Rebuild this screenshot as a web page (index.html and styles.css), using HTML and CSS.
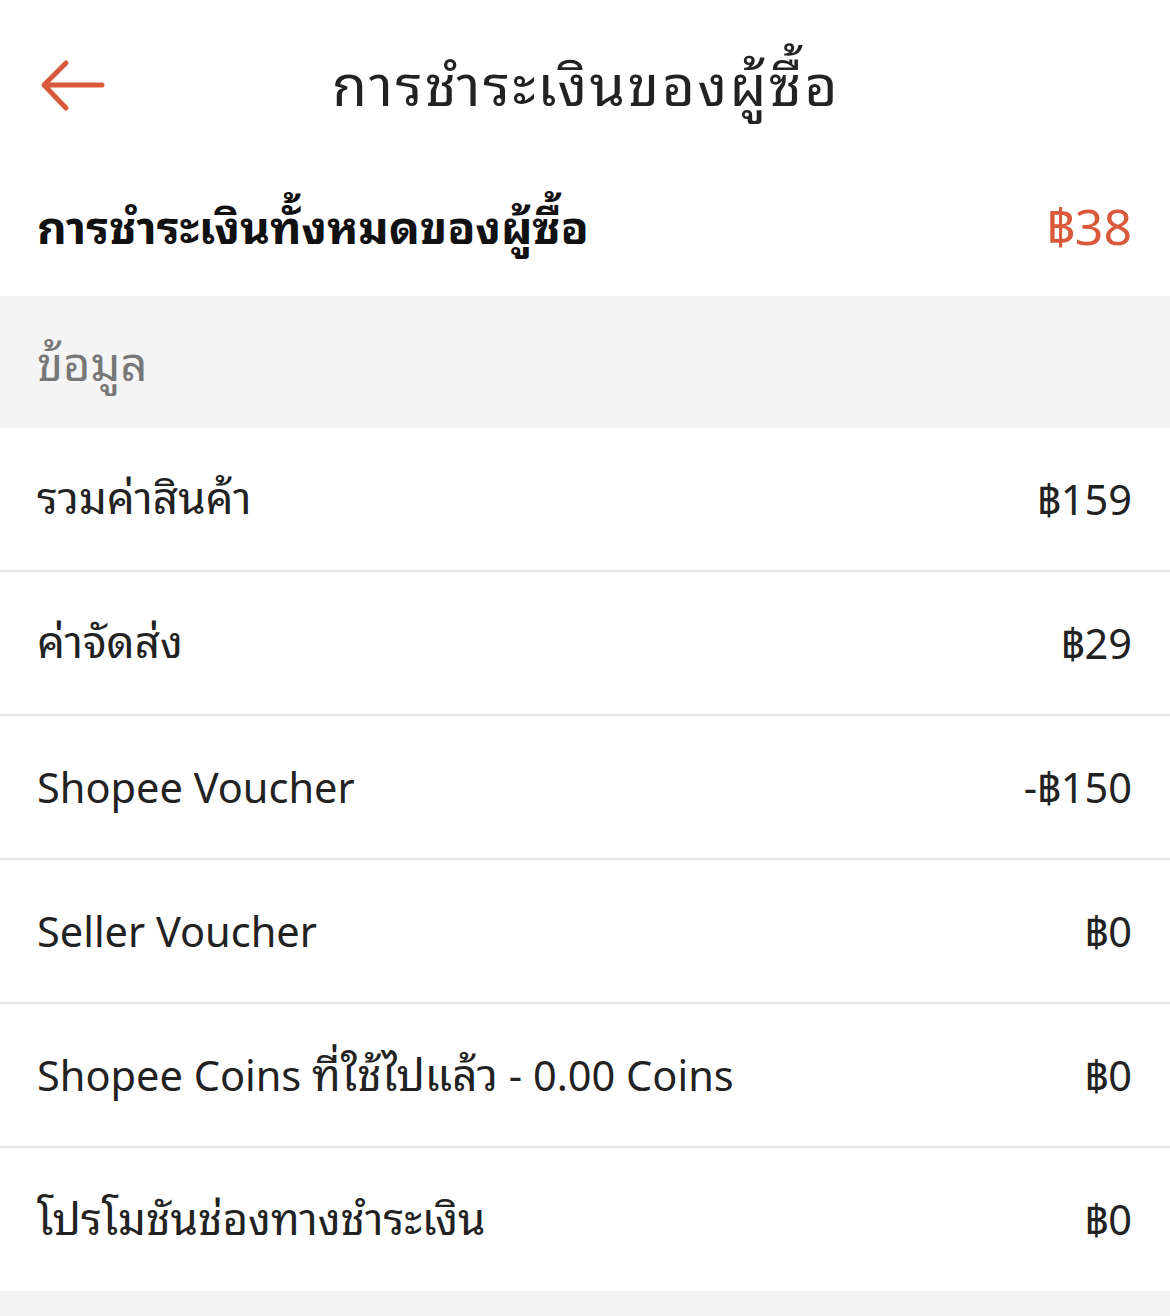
FILE: index.html
```html
<!DOCTYPE html>
<html lang="th">
<head>
<meta charset="utf-8">
<link rel="stylesheet" href="styles.css">
</head>
<body>
<div class="page">
  <header class="topbar">
    <div class="back">
      <svg width="66" height="56" viewBox="0 0 66 56"><path d="M62 27H5 M26 5 L4 27 L26 50" fill="none" stroke="#d85a3b" stroke-width="5" stroke-linecap="round" stroke-linejoin="round"/></svg>
    </div>
    <h1 class="title">การชำระเงินของผู้ซื้อ</h1>
  </header>
  <div class="total">
    <span class="total-label">การชำระเงินทั้งหมดของผู้ซื้อ</span>
    <span class="total-value">฿38</span>
  </div>
  <div class="section">ข้อมูล</div>
  <ul class="rows">
    <li class="row"><span class="th">รวมค่าสินค้า</span><span class="val">฿159</span></li>
    <li class="row"><span class="th">ค่าจัดส่ง</span><span class="val">฿29</span></li>
    <li class="row"><span>Shopee Voucher</span><span class="val">-฿150</span></li>
    <li class="row"><span>Seller Voucher</span><span class="val">฿0</span></li>
    <li class="row"><span>Shopee Coins <span class="th-in">ที่ใช้ไปแล้ว</span> - 0.00 Coins</span><span class="val">฿0</span></li>
    <li class="row"><span class="th">โปรโมชันช่องทางชำระเงิน</span><span class="val">฿0</span></li>
  </ul>
  <div class="footer"></div>
</div>
</body>
</html>
```
FILE: styles.css
```css
* { box-sizing: border-box; }
html, body { margin: 0; padding: 0; background: #fff; }
body { font-family: "Noto Sans", "Noto Sans Thai Looped", "Noto Sans Thai", "Open Sans", sans-serif; color: #222; }
.page { width: 1170px; height: 1316px; overflow: hidden; display: flex; flex-direction: column; }
.topbar { height: 165px; position: relative; display: flex; align-items: center; justify-content: center; }
.back { position: absolute; left: 40px; top: 58px; }
.back svg { display: block; }
.title { margin: 0; font-size: 57px; font-weight: 400; color: #222; padding-bottom: 4px; padding-left: 2px; letter-spacing: 2.5px; }
.total { height: 131px; display: flex; justify-content: space-between; align-items: center; padding: 0 38px 16px 37px; }
.total-label { font-size: 46px; font-weight: 700; color: #111; }
.total-value { font-size: 50px; color: #d85a3b; }
.section { height: 132px; background: #f4f4f4; color: #777; font-size: 47px; display: flex; align-items: center; padding: 0 37px 6px; }
.rows { list-style: none; margin: 0; padding: 0; }
.row { height: 144px; display: flex; justify-content: space-between; align-items: center; padding: 0 38px 0 37px; font-size: 41.5px; color: #222; border-bottom: 2px solid #e6e6e6; }
.row .th { font-size: 44px; padding-bottom: 10px; }
.row .th-in { font-size: 44px; line-height: 1; }
.row .val { padding-bottom: 6px; }
.row:last-child { border-bottom: none; height: 143px; }
.footer { flex: 1; background: #f4f4f4; }
```
